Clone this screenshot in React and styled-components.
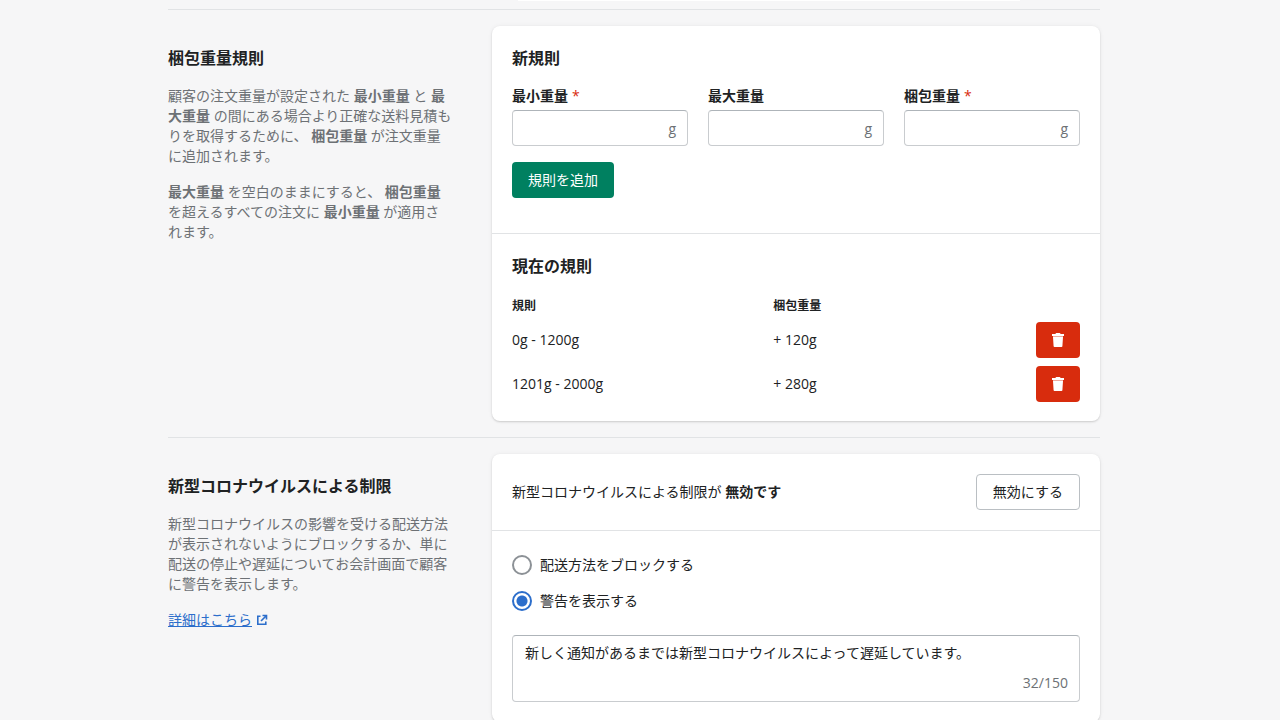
import React, { useState } from 'react';
import styled, { createGlobalStyle } from 'styled-components';

const GlobalStyle = createGlobalStyle`
  * {
    box-sizing: border-box;
  }

  body {
    margin: 0;
    background-color: #f6f6f7;
    color: #202223;
    font-family: 'Open Sans', 'Noto Sans CJK JP', sans-serif;
    font-size: 14px;
    line-height: 20px;
  }

  button, input, textarea {
    font: inherit;
    color: inherit;
  }
`;

const Page = styled.main`
  padding: 0 12px 20px 0;
`;

const Container = styled.div`
  max-width: 932px;
  margin: 0 auto;
`;

const PreviousCardEdge = styled.div`
  height: 1px;
  margin: 0 80px 8px 350px;
  background-color: #fff;
`;

const AnnotatedSection = styled.section`
  display: grid;
  grid-template-columns: 284px minmax(0, 1fr);
  gap: 40px;
  padding: 16px 0;
  border-top: 1px solid #e1e3e5;
`;

const Annotation = styled.div`
  display: flex;
  flex-direction: column;
  align-items: flex-start;
  gap: 16px;
  padding-top: 20px;
`;

const Heading = styled.h2`
  margin: 0;
  font-size: 16px;
  font-weight: 600;
  line-height: 24px;
`;

const Description = styled.p`
  margin: 0;
  color: #6d7175;
`;

const Strong = styled.strong`
  font-weight: 700;
`;

const Link = styled.a`
  display: inline-flex;
  align-items: center;
  gap: 4px;
  color: #2c6ecb;
`;

const Card = styled.div`
  background-color: #fff;
  border-radius: 8px;
  box-shadow: 0 0 5px rgba(23, 24, 24, 0.05), 0 1px 2px rgba(0, 0, 0, 0.15);
`;

const CardSection = styled.div`
  padding: 20px 20px ${(props) => props.$bottom || '20px'};

  & + & {
    border-top: 1px solid #e1e3e5;
  }
`;

const Fields = styled.div`
  display: grid;
  grid-template-columns: repeat(3, minmax(0, 1fr));
  gap: 20px;
  margin: 16px 0;
`;

const FieldLabel = styled.label`
  display: block;
  margin-bottom: 4px;
  font-weight: 600;
`;

const Required = styled.span`
  margin-left: 4px;
  color: #d82c0d;
  font-weight: 400;
`;

const InputBox = styled.div`
  display: flex;
  align-items: center;
  height: 36px;
  padding: 2px 11px 0;
  border: 1px solid #c9cccf;
  border-top-color: #aeb4b9;
  border-radius: 4px;
`;

const Input = styled.input`
  flex: 1;
  min-width: 0;
  padding: 0;
  border: none;
  outline: none;
  background: none;
`;

const Suffix = styled.span`
  color: #6d7175;
`;

const Button = styled.button`
  display: inline-flex;
  align-items: center;
  justify-content: center;
  height: 36px;
  padding: 0 ${(props) => (props.$icon ? '12px' : '16px')};
  border: ${(props) => (props.$color ? 'none' : '1px solid #babfc3')};
  border-radius: 4px;
  background-color: ${(props) => props.$color || '#fff'};
  color: ${(props) => (props.$color ? '#fff' : '#202223')};
  cursor: pointer;
`;

const RulesTable = styled.table`
  width: 100%;
  margin-top: 16px;
  border-collapse: collapse;
  table-layout: fixed;
`;

const Th = styled.th`
  width: ${(props) => props.$width};
  height: 24px;
  padding: 0;
  font-size: 12px;
  font-weight: 600;
  line-height: 16px;
  text-align: left;
`;

const Td = styled.td`
  height: 44px;
  padding: 0;
  text-align: ${(props) => props.$align || 'left'};

  button {
    vertical-align: middle;
  }
`;

const StatusRow = styled.div`
  display: flex;
  align-items: center;
  justify-content: space-between;
`;

const Choices = styled.div`
  display: flex;
  flex-direction: column;
  align-items: flex-start;
  gap: 8px;
  margin-bottom: 20px;
`;

const Choice = styled.label`
  display: flex;
  align-items: center;
  gap: 8px;
  height: 28px;
  cursor: pointer;
`;

const Radio = styled.input`
  appearance: none;
  width: 20px;
  height: 20px;
  margin: 0;
  border: 2px solid #8c9196;
  border-radius: 50%;
  background-color: #fff;

  &:checked {
    border-color: #2c6ecb;
    background-image: radial-gradient(circle, #2c6ecb 5px, transparent 6px);
  }
`;

const MessageBox = styled.div`
  padding: 7px 11px 8px 12px;
  border: 1px solid #c9cccf;
  border-top-color: #aeb4b9;
  border-radius: 4px;
`;

const Message = styled.textarea`
  display: block;
  width: 100%;
  height: 30px;
  padding: 0;
  border: none;
  outline: none;
  background: none;
  resize: none;
`;

const Counter = styled.div`
  color: #6d7175;
  text-align: right;
`;

const TrashIcon = () => (
  <svg width="20" height="20" viewBox="0 0 20 20" fill="currentColor" aria-hidden="true">
    <path d="M7.500 4a1 1 0 0 1 1-1h3a1 1 0 0 1 1 1H16v2H4V4z" />
    <path d="M5 6h10v1H5z" opacity="0.6" />
    <path d="M5 7h10l-.6 9.200a.9.9 0 0 1-.9.8h-7a.9.9 0 0 1-.9-.8z" />
  </svg>
);

const ExternalIcon = () => (
  <svg width="12" height="12" viewBox="0 0 12 12" fill="none" stroke="currentColor" strokeWidth="1.600" aria-hidden="true">
    <path d="M4.500 2.200H1.800v8h8V7.500" />
    <path d="M6.500 1.500h4v4M10.500 1.500L5 7" />
  </svg>
);

const rules = [
  { range: '0g - 1200g', weight: '+ 120g' },
  { range: '1201g - 2000g', weight: '+ 280g' },
];

const WeightField = ({ id, label, required }) => (
  <div>
    <FieldLabel htmlFor={id}>
      {label}
      {required && <Required>*</Required>}
    </FieldLabel>
    <InputBox>
      <Input id={id} type="text" inputMode="numeric" required={required} />
      <Suffix>g</Suffix>
    </InputBox>
  </div>
);

const WeightRules = () => (
  <AnnotatedSection>
    <Annotation>
      <Heading>梱包重量規則</Heading>
      <Description>
        顧客の注文重量が設定された <Strong>最小重量</Strong> と <Strong>最大重量</Strong>{' '}
        の間にある場合より正確な送料見積もりを取得するために、 <Strong>梱包重量</Strong>{' '}
        が注文重量に追加されます。
      </Description>
      <Description>
        <Strong>最大重量</Strong> を空白のままにすると、 <Strong>梱包重量</Strong>{' '}
        を超えるすべての注文に <Strong>最小重量</Strong> が適用されます。
      </Description>
    </Annotation>
    <Card>
      <CardSection $bottom="35px">
        <Heading>新規則</Heading>
        <Fields>
          <WeightField id="min-weight" label="最小重量" required />
          <WeightField id="max-weight" label="最大重量" />
          <WeightField id="package-weight" label="梱包重量" required />
        </Fields>
        <Button type="button" $color="#008060">規則を追加</Button>
      </CardSection>
      <CardSection $bottom="15px">
        <Heading>現在の規則</Heading>
        <RulesTable>
          <thead>
            <tr>
              <Th $width="46%">規則</Th>
              <Th>梱包重量</Th>
              <Th $width="44px" />
            </tr>
          </thead>
          <tbody>
            {rules.map((rule) => (
              <tr key={rule.range}>
                <Td>{rule.range}</Td>
                <Td>{rule.weight}</Td>
                <Td $align="right">
                  <Button type="button" $color="#d82c0d" $icon aria-label="削除">
                    <TrashIcon />
                  </Button>
                </Td>
              </tr>
            ))}
          </tbody>
        </RulesTable>
      </CardSection>
    </Card>
  </AnnotatedSection>
);

const CovidRestrictions = () => {
  const [mode, setMode] = useState('warn');
  const [message, setMessage] = useState('新しく通知があるまでは新型コロナウイルスによって遅延しています。');

  return (
    <AnnotatedSection>
      <Annotation>
        <Heading>新型コロナウイルスによる制限</Heading>
        <Description>
          新型コロナウイルスの影響を受ける配送方法が表示されないようにブロックするか、単に配送の停止や遅延についてお会計画面で顧客に警告を表示します。
        </Description>
        <Link href="#">
          詳細はこちら
          <ExternalIcon />
        </Link>
      </Annotation>
      <Card>
        <CardSection>
          <StatusRow>
            <span>
              新型コロナウイルスによる制限が <Strong>無効です</Strong>
            </span>
            <Button type="button">無効にする</Button>
          </StatusRow>
        </CardSection>
        <CardSection>
          <Choices>
            <Choice>
              <Radio type="radio" name="mode" checked={mode === 'block'} onChange={() => setMode('block')} />
              配送方法をブロックする
            </Choice>
            <Choice>
              <Radio type="radio" name="mode" checked={mode === 'warn'} onChange={() => setMode('warn')} />
              警告を表示する
            </Choice>
          </Choices>
          <MessageBox>
            <Message
              aria-label="警告メッセージ"
              maxLength={150}
              value={message}
              onChange={(e) => setMessage(e.target.value)}
            />
            <Counter>{message.length}/150</Counter>
          </MessageBox>
        </CardSection>
      </Card>
    </AnnotatedSection>
  );
};

export default function App() {
  return (
    <>
      <GlobalStyle />
      <Page>
        <Container>
          <PreviousCardEdge />
          <WeightRules />
          <CovidRestrictions />
        </Container>
      </Page>
    </>
  );
}
